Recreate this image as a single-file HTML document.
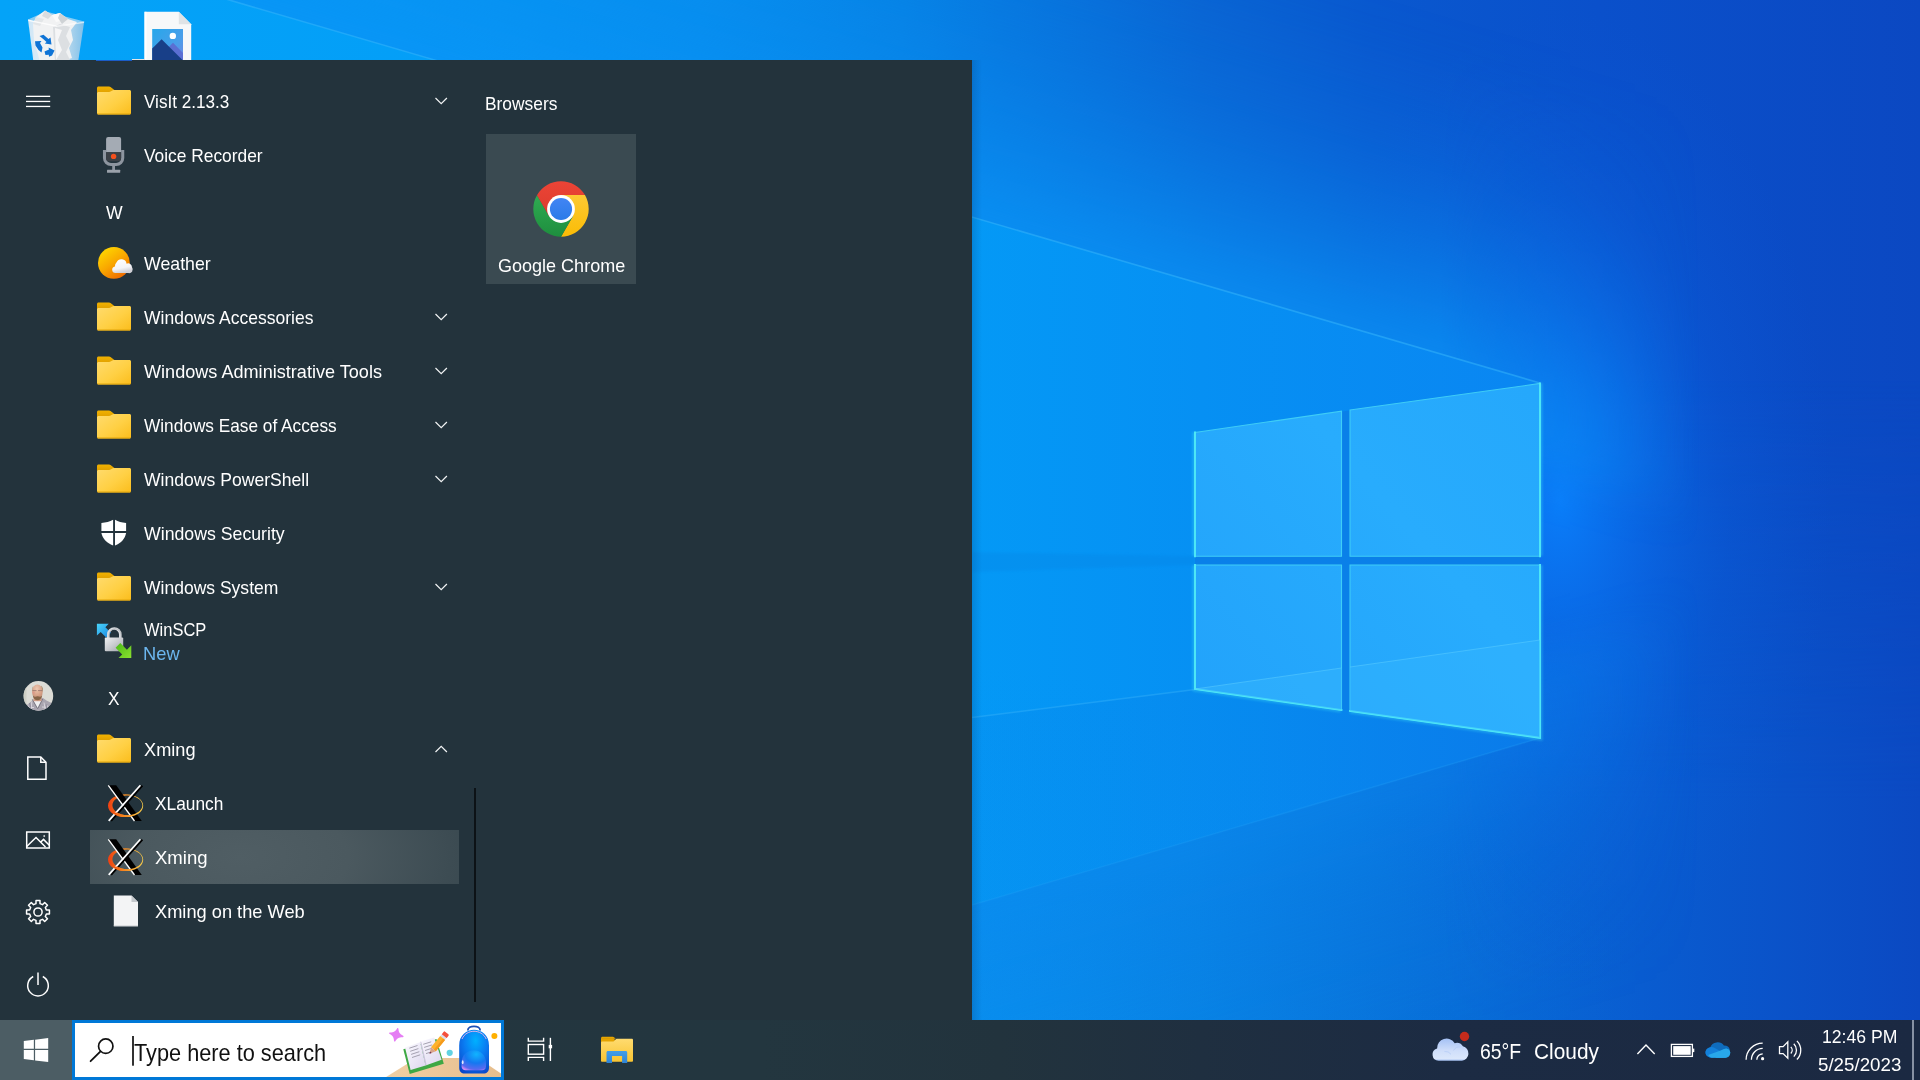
<!DOCTYPE html>
<html lang="en"><head><meta charset="utf-8"><title>Desktop</title>
<style>
html,body{margin:0;padding:0}
body{width:1920px;height:1080px;overflow:hidden;position:relative;background:#0a5fd0;font-family:"Liberation Sans",sans-serif}
.abs{position:absolute}
.tx{position:absolute;line-height:0;white-space:nowrap;display:block;transform-origin:0 0}
#wall{position:absolute;left:0;top:0;width:1920px;height:1080px}
#menu{position:absolute;left:0;top:60px;width:972px;height:960px;background:#23333c}
#taskbar{position:absolute;left:0;top:1020px;width:1920px;height:60px;background:linear-gradient(90deg,#24363f 0,#23363f 760px,#22333d 1000px,#1f2f40 1200px,#1c2b43 1450px,#1b2942 1920px)}
#startbtn{position:absolute;left:0;top:1020px;width:72px;height:60px;background:#4c5d64}
#search{position:absolute;left:72px;top:1020px;width:426px;height:54px;border:3px solid #0078d7;background:#fff}
#hl{position:absolute;left:90px;top:830px;width:369px;height:54px;background:radial-gradient(ellipse 270px 140px at 150px 27px,#505e64 0,#4b595f 40%,#3d4c53 78%,#36464d 100%)}
#tile{position:absolute;left:486px;top:134px;width:150px;height:150px;background:#3a4a51}
#scroll{position:absolute;left:474px;top:788px;width:2px;height:214px;background:#0c1216}
#showdesk{position:absolute;left:1912px;top:1020px;width:2px;height:60px;background:#8791a3}
svg{position:absolute;overflow:visible}
</style></head>
<body>
<svg id="wall" width="1920" height="1080" viewBox="0 0 1920 1080">
<defs>
<linearGradient id="wg" x1="0" x2="1920" y1="0" y2="0" gradientUnits="userSpaceOnUse">
<stop offset="0" stop-color="#02a2f8"/><stop offset=".21" stop-color="#039cf5"/><stop offset=".365" stop-color="#0590ef"/><stop offset=".47" stop-color="#0683e5"/><stop offset=".52" stop-color="#0778df"/><stop offset=".625" stop-color="#0964d3"/><stop offset=".715" stop-color="#0958cf"/><stop offset=".833" stop-color="#0a50cb"/><stop offset="1" stop-color="#0b48c2"/>
</linearGradient>
<linearGradient id="wg2" x1="0" x2="1920" y1="0" y2="0" gradientUnits="userSpaceOnUse">
<stop offset="0" stop-color="#03a3f8"/><stop offset=".3" stop-color="#049bf5"/><stop offset=".44" stop-color="#0794f1"/><stop offset=".52" stop-color="#098ced"/><stop offset=".625" stop-color="#0880e3"/><stop offset=".73" stop-color="#0870d9"/><stop offset=".855" stop-color="#095cd0"/><stop offset="1" stop-color="#0b49c2"/>
</linearGradient>
<linearGradient id="vm" x1="0" x2="0" y1="380" y2="800" gradientUnits="userSpaceOnUse"><stop offset="0" stop-color="#fff" stop-opacity="0"/><stop offset="1" stop-color="#fff" stop-opacity="1"/></linearGradient>
<mask id="vmask" maskUnits="userSpaceOnUse" x="0" y="0" width="1920" height="1080"><rect width="1920" height="1080" fill="url(#vm)"/></mask>
<linearGradient id="ray" x1="0" x2="1540" y1="0" y2="0" gradientUnits="userSpaceOnUse">
<stop offset="0" stop-color="#04a3f8"/><stop offset=".63" stop-color="#0499f6"/><stop offset=".78" stop-color="#0690f3"/><stop offset="1" stop-color="#0a86f2"/>
</linearGradient>
<linearGradient id="floor" x1="972" x2="1540" y1="0" y2="0" gradientUnits="userSpaceOnUse">
<stop offset="0" stop-color="#0593f2"/><stop offset=".5" stop-color="#0788ee"/><stop offset="1" stop-color="#0a78e8"/>
</linearGradient>
<radialGradient id="bot" cx="880" cy="1100" r="800" gradientUnits="userSpaceOnUse" gradientTransform="translate(880 1100) scale(1 .55) translate(-880 -1100)">
<stop offset="0" stop-color="#0aa0f4" stop-opacity=".25"/><stop offset=".5" stop-color="#0a94ee" stop-opacity=".12"/><stop offset="1" stop-color="#0a88ea" stop-opacity="0"/>
</radialGradient>
<radialGradient id="glow" cx="1560" cy="500" r="440" gradientUnits="userSpaceOnUse" gradientTransform="translate(1560 500) scale(.62 1.12) translate(-1560 -500)">
<stop offset="0" stop-color="#0a80fc" stop-opacity=".95"/><stop offset=".28" stop-color="#0a72f2" stop-opacity=".62"/><stop offset=".62" stop-color="#0a62e2" stop-opacity=".25"/><stop offset="1" stop-color="#0a58d8" stop-opacity="0"/>
</radialGradient>
<linearGradient id="pane" x1="1195" x2="1540" y1="700" y2="400" gradientUnits="userSpaceOnUse">
<stop offset="0" stop-color="#22a3fb"/><stop offset=".6" stop-color="#28acfd"/><stop offset="1" stop-color="#25a8fc"/>
</linearGradient>
<linearGradient id="msh" x1="972" x2="982" y1="0" y2="0" gradientUnits="userSpaceOnUse"><stop offset="0" stop-color="#003a70" stop-opacity=".22"/><stop offset="1" stop-color="#003a70" stop-opacity="0"/></linearGradient>
<linearGradient id="haze" x1="1256" y1="300" x2="1340.2" y2="12.0" gradientUnits="userSpaceOnUse"><stop offset="0" stop-color="#0a94f6" stop-opacity=".8"/><stop offset=".25" stop-color="#0a8ef2" stop-opacity=".55"/><stop offset=".6" stop-color="#0a86ee" stop-opacity=".22"/><stop offset="1" stop-color="#0a80ea" stop-opacity="0"/></linearGradient>
<linearGradient id="haze2" x1="1256" y1="821.5" x2="1329.3" y2="1070.9" gradientUnits="userSpaceOnUse"><stop offset="0" stop-color="#0a8af0" stop-opacity=".5"/><stop offset=".45" stop-color="#0a80ea" stop-opacity=".22"/><stop offset="1" stop-color="#0a78e6" stop-opacity="0"/></linearGradient>
<linearGradient id="hm" x1="1440" x2="1700" y1="0" y2="0" gradientUnits="userSpaceOnUse"><stop offset="0" stop-color="#fff" stop-opacity="1"/><stop offset="1" stop-color="#fff" stop-opacity="0"/></linearGradient>
<mask id="hmask" maskUnits="userSpaceOnUse" x="0" y="0" width="1920" height="1080"><rect width="1920" height="1080" fill="url(#hm)"/></mask>
<filter id="b20" color-interpolation-filters="sRGB" x="-10%" y="-30%" width="120%" height="160%"><feGaussianBlur stdDeviation="22"/></filter>
<filter id="b8" color-interpolation-filters="sRGB" x="-20%" y="-20%" width="140%" height="140%"><feGaussianBlur stdDeviation="8"/></filter>
<filter id="b2" color-interpolation-filters="sRGB"><feGaussianBlur stdDeviation="1.2"/></filter>
</defs>
<rect width="1920" height="1080" fill="url(#wg)"/>
<rect width="1920" height="1080" fill="url(#wg2)" mask="url(#vmask)"/>
<!-- glow right of logo -->
<rect x="1200" y="0" width="720" height="1020" fill="url(#glow)"/>
<g mask="url(#hmask)"><polygon points="-122.4,-19.5 1777.6,535.8 1889.8,151.8 -10.2,-403.4" fill="url(#haze)" filter="url(#b20)"/></g>
<g mask="url(#hmask)"><polygon points="1777.4,584.8 577.4,937.6 673.3,1263.8 1873.3,911.0" fill="url(#haze2)" filter="url(#b20)"/></g>
<!-- main light ray: upper edge line through (205,-7)-(1540,383); lower edge to floor -->
<polygon points="0,-67 1540,383 1540,738 972,905 0,1100" fill="url(#ray)"/>
<!-- floor lower band -->
<polygon points="0,740 972,717 1195,689 1540,738 972,905 0,1180" fill="url(#floor)" opacity=".8"/>

<rect y="600" width="1920" height="480" fill="url(#bot)"/>
<line x1="972" y1="717.500" x2="1195" y2="689.500" stroke="#3cb8fc" stroke-width="1.500" opacity=".4"/>
<line x1="972" y1="905" x2="1540" y2="738" stroke="#2aa4f6" stroke-width="1.500" opacity=".22"/>
<!-- upper ray bright edge -->
<line x1="0" y1="-67" x2="1540" y2="383" stroke="#35b4fb" stroke-width="1.6" opacity=".55"/>
<polygon points="972,552 1195,556 1195,565 972,572" fill="#0580e0" opacity=".25" filter="url(#b2)"/>
<g fill="none" stroke="#40e0f5" stroke-width="5" opacity=".35" filter="url(#b2)"><polyline points="1195,432 1195,556"/><polyline points="1195,565 1195,689 1341,710"/><polyline points="1350,711 1540,738 1540,565"/><polyline points="1540,556 1540,383"/></g>
<polygon points="1195,432.500 1540,383.500 1540,737.800 1195,689" fill="#0a7ee6" opacity=".85"/>
<!-- logo panes -->
<g fill="url(#pane)" stroke="#3fcdf6" stroke-width="1.100" stroke-linejoin="miter">
<polygon points="1195,432.5 1341.5,411.2 1341.5,556.3 1195,556.3"/>
<polygon points="1350,410 1540,383.5 1540,556.3 1350,556.3"/>
<polygon points="1195,565 1341.5,565 1341.5,710 1195,689"/>
<polygon points="1350,565 1540,565 1540,737.8 1350,711"/>
</g>
<g fill="none" stroke="#4fe8f6" stroke-width="1.900" stroke-linecap="square"><polyline points="1195,432.500 1195,556.300"/><polyline points="1195,565 1195,689 1341.500,710"/><polyline points="1350,711 1540,737.800 1540,565"/><polyline points="1540,556.300 1540,383.500"/></g>
<!-- reflection inside lower panes -->
<polygon points="1195,689 1341.500,668 1341.500,710" fill="#35b6fe" opacity=".5"/><line x1="1195" y1="689" x2="1341.500" y2="668" stroke="#5fd0ff" stroke-width="1" opacity=".5"/>
<polygon points="1350,667 1540,640 1540,737.800 1350,711" fill="#35b6fe" opacity=".45"/><line x1="1350" y1="667" x2="1540" y2="640" stroke="#5fd0ff" stroke-width="1" opacity=".5"/>
<!-- menu shadow -->
<rect x="972" y="60" width="10" height="960" fill="url(#msh)"/>
</svg>

<svg style="left:0;top:0" width="220" height="60" viewBox="0 0 220 60">
<defs>
<linearGradient id="binL" x1="0" x2="1" y1="0" y2="0"><stop offset="0" stop-color="#cfe6f6"/><stop offset="1" stop-color="#eef4f8"/></linearGradient>
<linearGradient id="binR" x1="0" x2="1" y1="0" y2="0"><stop offset="0" stop-color="#dfe9ef"/><stop offset="1" stop-color="#7fc0ea"/></linearGradient>
<linearGradient id="sky" x1="0" x2="1" y1="0" y2="1"><stop offset="0" stop-color="#27a7ea"/><stop offset=".6" stop-color="#4a9eea"/><stop offset="1" stop-color="#7a7fe0"/></linearGradient>
<clipPath id="c60"><rect x="0" y="0" width="220" height="60"/></clipPath>
</defs>
<g clip-path="url(#c60)">
<!-- recycle bin -->
<polygon points="28,19.5 57,25.5 55.5,66 34,66" fill="url(#binL)"/>
<polygon points="57,25.5 84.2,21.5 77.5,66 55.5,66" fill="url(#binR)"/>
<polygon points="28,19.5 46,11.5 84.2,21.5 57,25.5" fill="#bfe0f5" opacity=".7"/>
<!-- crumpled paper -->
<polygon points="33,24 36,17 45,10.5 52,15 60,13 68,19 77,22 71,30 73,40 69,48 72,58 60,62 40,62 34,40" fill="#f1f2f3"/>
<polygon points="45,10.5 52,15 48,19 42,16" fill="#d9dcdf"/>
<polygon points="52,15 60,13 64,20 56,22" fill="#fafafa"/>
<polygon points="60,13 68,19 62,24 58,18" fill="#cfd3d6"/>
<polygon points="36,17 44,19 40,26 33,24" fill="#e3e6e8"/>
<polygon points="53,27 60,24 70,27 66,36 70,44 66,52 70,60 55,62" fill="#dcdfe2"/>
<polygon points="55,28 62,30 58,40 62,50 56,60" fill="#f6f6f7"/>
<polygon points="28,19.5 57,25.5 57,27 28.3,21" fill="#fff" opacity=".8"/>
<polygon points="57,25.5 84.2,21.5 84,23 57,27" fill="#fff" opacity=".6"/>
<!-- recycle arrows -->
<g fill="#0f74d6">
<polygon points="39.5,36 43.5,34.8 48.5,39 50.5,37.5 51.5,44.5 44.8,43.5 46.5,42 43.5,39.2"/>
<polygon points="35,41.2 41.5,41 40,43 42.5,47.5 41.5,52.5 38.5,50 35.5,45.5"/>
<polygon points="44.5,51.5 49,49.5 48.5,47.5 54.5,50.5 52,55.5 49,56.8 48.8,54.8 45.5,55"/>
</g>
<!-- image file -->
<polygon points="144.5,11.8 178.8,11.8 191.2,24.2 191.2,66 144.5,66" fill="#f7f8f9"/>
<polygon points="178.8,11.8 191.2,24.2 178.8,24.2" fill="#dfe3e6"/>
<rect x="144.5" y="11.8" width="2" height="54" fill="#fff"/>
<rect x="152.2" y="29" width="30.8" height="37" fill="url(#sky)"/>
<circle cx="172.8" cy="35.9" r="3.2" fill="#fff"/>
<polygon points="163,53 173,42.8 183,53 183,66 163,66" fill="#5b6fd3"/>
<polygon points="152.2,48.5 161.6,39.3 183,60.5 183,66 152.2,66" fill="#183f88"/>
</g>
</svg>

<div id="menu"></div>
<div id="hl"></div>
<div class="abs" style="left:96px;top:60px;width:36px;height:1px;background:#1b5cc8"></div><div class="abs" style="left:132px;top:59px;width:13px;height:1px;background:#e4e6e8"></div>
<div id="tile"></div>
<div id="scroll"></div>
<div id="taskbar"></div>
<div id="startbtn"></div>
<div id="search"></div>
<div id="showdesk"></div>
<svg style="left:0;top:0" width="1920" height="1080" viewBox="0 0 1920 1080">
<defs>
<linearGradient id="fBody" x1="0" x2="1" y1="0" y2="1"><stop offset="0" stop-color="#ffdb6e"/><stop offset=".55" stop-color="#ffd044"/><stop offset="1" stop-color="#fbbd1c"/></linearGradient>
<linearGradient id="fTab" x1="0" x2="0" y1="0" y2="1"><stop offset="0" stop-color="#f2b200"/><stop offset="1" stop-color="#dc9c00"/></linearGradient>
<symbol id="folder" viewBox="0 0 34 28" overflow="visible">
<path d="M1.500 0h10.600c.5 0 1 .2 1.400.5l3.900 3.100V8H0V1.500C0 .7.700 0 1.500 0z" fill="url(#fTab)"/>
<path d="M0 7.300c0-.9.700-1.600 1.600-1.600h10.600c.5 0 1-.2 1.400-.5l2.300-1.300c.4-.2.800-.35 1.300-.35h15.300c.8 0 1.500.7 1.500 1.500v21.450c0 .8-.7 1.500-1.500 1.500H1.500C.7 28 0 27.300 0 26.500z" fill="url(#fBody)"/>
<path d="M0 26v.5C0 27.300.7 28 1.500 28h31c.8 0 1.500-.7 1.500-1.500V26c0 .6-.6 1-1.300 1H1.300C.6 27 0 26.600 0 26z" fill="#e2a50b"/>
</symbol>
<symbol id="chev" viewBox="0 0 12 7" overflow="visible"><polyline points="0.3,0.5 6,6.2 11.700,0.500" fill="none" stroke="#f2f4f5" stroke-width="1.200"/></symbol>
<symbol id="xicon" viewBox="0 0 35 37" overflow="visible">
<defs><linearGradient id="xr" x1="0" x2="1" y1="0" y2="0"><stop offset="0" stop-color="#ee3f12"/><stop offset=".4" stop-color="#f5801c"/><stop offset="1" stop-color="#f7cc4a"/></linearGradient>
<clipPath id="xlow"><rect x="-2" y="27.500" width="40" height="12"/></clipPath></defs>
<path id="xring" fill="url(#xr)" fill-rule="evenodd" d="M17.800 9.300C27.500 9.300 35.400 14.400 35.400 20.700S27.500 32.100 17.800 32.100 0.200 27 0.200 20.700 8.100 9.300 17.800 9.300zM19.600 10.400C11.300 10.400 4.600 14.800 4.600 20.300s6.700 9.900 15 9.900 15-4.400 15-9.900-6.700-9.900-15-9.900z"/>
<polygon points="0.600,0.300 8.400,0.300 34,35.900 26.300,35.900" fill="#000"/>
<line x1="0.500" y1="0.300" x2="26.700" y2="36" stroke="#fff" stroke-width="1.300"/>
<line x1="34.600" y1="0.600" x2="3.300" y2="35.800" stroke="#000" stroke-width="1.900"/>
<line x1="32.600" y1="0.300" x2="0.900" y2="35.900" stroke="#fff" stroke-width="1.700"/>
<use href="#xring" clip-path="url(#xlow)"/>
</symbol>
</defs>

<rect x="26" y="95.7" width="24.200" height="1.300" fill="#fff"/>
<rect x="26" y="100.80000000000001" width="24.200" height="1.300" fill="#fff"/>
<rect x="26" y="105.80000000000001" width="24.200" height="1.300" fill="#fff"/>
<use href="#folder" x="97" y="86.4" width="34" height="28"/>
<use href="#folder" x="97" y="302.4" width="34" height="28"/>
<use href="#folder" x="97" y="356.4" width="34" height="28"/>
<use href="#folder" x="97" y="410.4" width="34" height="28"/>
<use href="#folder" x="97" y="464.4" width="34" height="28"/>
<use href="#folder" x="97" y="572.4" width="34" height="28"/>
<use href="#folder" x="97" y="734.4" width="34" height="28"/>
<use href="#chev" x="435.200" y="97.5" width="12" height="7"/>
<use href="#chev" x="435.200" y="313.5" width="12" height="7"/>
<use href="#chev" x="435.200" y="367.5" width="12" height="7"/>
<use href="#chev" x="435.200" y="421.5" width="12" height="7"/>
<use href="#chev" x="435.200" y="475.5" width="12" height="7"/>
<use href="#chev" x="435.200" y="583.5" width="12" height="7"/>
<g transform="translate(435.200 752.500) scale(1 -1)"><use href="#chev" width="12" height="7"/></g>
<use href="#xicon" x="107.800" y="785" width="35" height="37"/>
<use href="#xicon" x="107.800" y="839" width="35" height="37"/>
<g>
<defs><linearGradient id="micg" x1="0" x2="0" y1="137" y2="153"><stop offset="0" stop-color="#a4abb4"/><stop offset="1" stop-color="#7f8791"/></linearGradient></defs>
<path d="M104.500 150v8a6.500 6.500 0 0 0 6.500 6.500h5.200a6.500 6.500 0 0 0 6.500-6.500v-8" fill="none" stroke="#8d959f" stroke-width="3.100"/>
<rect x="112.200" y="165" width="2.800" height="5.500" fill="#8d959f"/>
<rect x="107" y="169.800" width="13.200" height="3" rx=".5" fill="#9aa1aa"/>
<path d="M106.100 139a2 2 0 0 1 2-2h11a2 2 0 0 1 2 2v13.300h-15z" fill="url(#micg)"/>
<path d="M106.100 152.200h15v6a3 3 0 0 1-3 3h-9a3 3 0 0 1-3-3z" fill="#3b4046"/>
<circle cx="113.600" cy="156.400" r="2.700" fill="#f4501d"/>
</g>
<g>
<defs><linearGradient id="sung" x1="0.150" x2=".8" y1=".05" y2=".95"><stop offset="0" stop-color="#ffd800"/><stop offset=".5" stop-color="#f9a800"/><stop offset="1" stop-color="#ee6800"/></linearGradient>
<linearGradient id="cldg" x1="0" x2=".3" y1="0" y2="1" gradientUnits="objectBoundingBox"><stop offset="0" stop-color="#ffffff"/><stop offset=".7" stop-color="#f4f4f6"/><stop offset="1" stop-color="#d0d0d6"/></linearGradient></defs>
<circle cx="113.900" cy="262.900" r="15.900" fill="url(#sung)"/>
<g fill="url(#cldg)"><path d="M115.500 273.100a3.300 3.300 0 0 1-.6-6.550 5.400 5.400 0 0 1 1.700-4.200 5.300 5.300 0 0 1 10 1.300 3.800 3.800 0 0 1 5.400 3.500 3.750 3.750 0 0 1-3.700 5.950z"/></g>
</g>
<g fill="#fff">
<path d="M113.100 519.800v11.100h-11.700v-8c4.500-.2 8.300-1.200 11.700-3.100z"/>
<path d="M115 519.800c3.400 1.900 6.600 2.900 11.100 3.100v8H115z"/>
<path d="M101.400 532.900h11.700v12.500c-6.300-2.700-10.600-6.700-11.700-12.500z"/>
<path d="M115 532.900h11.100c-1.100 5.800-4.800 9.800-11.100 12.500z"/>
</g>
<g>
<defs><linearGradient id="lockg" x1="0" x2="1" y1="0" y2="1"><stop offset="0" stop-color="#f0f1f2"/><stop offset=".5" stop-color="#c9ccd0"/><stop offset="1" stop-color="#9ea2a8"/></linearGradient>
<linearGradient id="bla" x1="0" x2="1" y1="0" y2="1"><stop offset="0" stop-color="#49d5fb"/><stop offset="1" stop-color="#1b86e0"/></linearGradient>
<linearGradient id="gra" x1="0" x2="1" y1="0" y2="1"><stop offset="0" stop-color="#4aba16"/><stop offset="1" stop-color="#8be030"/></linearGradient></defs>
<path d="M96.900 623.800h11.800l-3.300 3.400 5.500 5.500-4.700 4.700-5.500-5.500-3.800 3.700z" fill="url(#bla)"/>
<path d="M108.300 639v-4.500a6 6 0 0 1 12 0v4.500" fill="none" stroke="#d9dcdf" stroke-width="2.600"/>
<path d="M108.300 639v-4.500a6 6 0 0 1 12 0v4.500" fill="none" stroke="#8e9399" stroke-width=".7" transform="translate(.9 .3)" opacity=".7"/>
<rect x="104.800" y="637.500" width="18.400" height="13.800" rx="1" fill="url(#lockg)"/>
<path d="M131.300 658.100h-12.800l3.700-3.700-6.600-6.600 4.700-4.700 6.600 6.600 4.400-4.400z" fill="url(#gra)"/>
</g>
<g>
<path d="M113.800 895.500h17.700l6.500 6.500v24.300h-24.200z" fill="#f3f4f5"/>
<path d="M131.500 895.500l6.500 6.500h-6.500z" fill="#c4c8cc"/>
<rect x="113.800" y="925.300" width="24.200" height="1" fill="#d5d7da"/>
</g>
<g>
<defs><clipPath id="avc"><circle cx="38.400" cy="695.900" r="14.800"/></clipPath>
<radialGradient id="avf" cx=".45" cy=".3" r=".7"><stop offset="0" stop-color="#edc7b0"/><stop offset=".6" stop-color="#d9a58c"/><stop offset="1" stop-color="#c48d74"/></radialGradient>
<filter id="avb"><feGaussianBlur stdDeviation=".45"/></filter></defs>
<g clip-path="url(#avc)">
<rect x="23" y="680" width="31" height="32" fill="#dcdcd6"/>
<rect x="23" y="680" width="3.500" height="32" fill="#cfd0c6"/>
<g filter="url(#avb)">
<path d="M24.500 712l2.500-7 6.500-5.500 4-1.800 5.500.3 3.500 2.500 5 2.500 3 9z" fill="#a9a5b0"/>
<path d="M28 712l1.500-9M31 712l.8-10.500M45.500 712l-1.500-9.500M49 712l-2-7.500M26 707.500l8 0M42 707l9 .5" stroke="#d8d5dc" stroke-width="1" fill="none"/>
<path d="M29.500 703l1.500 9M47 704l-1 8" stroke="#7f7a8c" stroke-width=".8" fill="none"/>
<path d="M33.200 700.500l4.400 7.800 4.200-8z" fill="#efeff0"/>
<path d="M32.300 699.300l5.200 9.200M42.600 699l-4.800 9.500" stroke="#55535f" stroke-width=".8" fill="none" opacity=".8"/>
<path d="M33.500 697h8v4.200h-8z" fill="#cf9d86"/>
<ellipse cx="37.400" cy="691.700" rx="5.300" ry="7.300" fill="url(#avf)"/>
<path d="M41.200 685.500c1.300 1.200 1.900 3.300 1.700 6.500-.5-2.200-1.200-4.200-1.700-6.500zM33.300 686c-.9 1.200-1.300 2.800-1.200 5 .3-2 .7-3.500 1.200-5z" fill="#9a7a52"/>
<path d="M32.800 695.500c.5 3 2.300 4.700 4.700 4.700s4.200-1.700 4.700-4.700c-1 1-1.700 1.300-2.600 1.300-.7-.8-3.500-.8-4.200 0-.9 0-1.600-.3-2.600-1.300z" fill="#86654a"/>
<path d="M32.300 690.600h4.200M38 690.600h4.400" stroke="#8a6a66" stroke-width=".7"/>
<ellipse cx="33.600" cy="692.800" rx="1.300" ry="1" fill="#dd8f88" opacity=".6"/>
</g>
</g></g>
<g fill="none" stroke="#fff" stroke-width="1.500">
<path d="M27.800 757h13l5.200 5.200v17H27.800z"/><path d="M40.800 757v5.200h5.200"/>
<rect x="26.700" y="832" width="22.600" height="16"/>
<path d="M26.700 846.500l9.300-9 9.500 9.500M40.300 842.500l3.200-3.100 5.800 5.800"/>
<circle cx="44.200" cy="836" r=".6" fill="#fff" stroke-width=".6"/>
<circle cx="38" cy="912" r="4.100"/>
<path d="M38 972.500v12.500"/>
<path d="M33.200 976.500a10.300 10.300 0 1 0 9.600 0"/>
</g>
<path d="M35.99 903.64 L36.01 900.57 L39.99 900.57 L40.01 903.64 L42.49 904.67 L44.67 902.51 L47.49 905.33 L45.33 907.51 L46.36 909.99 L49.43 910.01 L49.43 913.99 L46.36 914.01 L45.33 916.49 L47.49 918.67 L44.67 921.49 L42.49 919.33 L40.01 920.36 L39.99 923.43 L36.01 923.43 L35.99 920.36 L33.51 919.33 L31.33 921.49 L28.51 918.67 L30.67 916.49 L29.64 914.01 L26.57 913.99 L26.57 910.01 L29.64 909.99 L30.67 907.51 L28.51 905.33 L31.33 902.51 L33.51 904.67Z" fill="none" stroke="#fff" stroke-width="1.500" stroke-linejoin="round"/>
<g>
<defs>
<linearGradient id="cy" x1="0" x2="0" y1="195.1" y2="236.7" gradientUnits="userSpaceOnUse"><stop offset="0" stop-color="#fcc934"/><stop offset="1" stop-color="#fbbc05"/></linearGradient>
<linearGradient id="cg" x1="0" x2="0" y1="195.1" y2="236.7" gradientUnits="userSpaceOnUse"><stop offset="0" stop-color="#2fab52"/><stop offset="1" stop-color="#1e8e3e"/></linearGradient>
<linearGradient id="crd" x1="0" x2="0" y1="181.3" y2="222.9" gradientUnits="userSpaceOnUse"><stop offset="0" stop-color="#ec4436"/><stop offset="1" stop-color="#d93a2b"/></linearGradient>
<linearGradient id="cb" x1="0" x2="0" y1="197.9" y2="220.1" gradientUnits="userSpaceOnUse"><stop offset="0" stop-color="#4285f4"/><stop offset="1" stop-color="#2a7be8"/></linearGradient>
</defs>
<path d="M561.00 195.10L584.96 195.10A27.7 27.7 0 0 1 561.06 236.70L573.04 215.95Z" fill="url(#cy)"/>
<path d="M573.04 215.95L561.06 236.70A27.7 27.7 0 0 1 536.98 195.20L548.96 215.95Z" fill="url(#cg)"/>
<path d="M548.96 215.95L536.98 195.20A27.7 27.7 0 0 1 584.96 195.10L561.00 195.10Z" fill="url(#crd)"/>
<circle cx="561.0" cy="209.0" r="13.9" fill="#fff"/>
<circle cx="561.0" cy="209.0" r="11.1" fill="url(#cb)"/>
</g>
</svg>
<svg style="left:0;top:0" width="1920" height="1080" viewBox="0 0 1920 1080">
<defs>
<linearGradient id="tbl" x1="0" x2="1" y1="0" y2="0"><stop offset="0" stop-color="#f0cfa4"/><stop offset="1" stop-color="#e6bd8c"/></linearGradient>
<radialGradient id="bpk" cx=".55" cy=".25" r=".85"><stop offset="0" stop-color="#00b0ff"/><stop offset=".45" stop-color="#0a7cf2"/><stop offset="1" stop-color="#0a45c8"/></radialGradient>
<radialGradient id="bpp" cx=".6" cy=".2" r=".9"><stop offset="0" stop-color="#10b4ff"/><stop offset=".5" stop-color="#1478f0"/><stop offset=".85" stop-color="#5a6af0"/><stop offset="1" stop-color="#d88af5"/></radialGradient>
<linearGradient id="pg" x1="0" x2="1" y1="0" y2="1"><stop offset="0" stop-color="#fbfaff"/><stop offset="1" stop-color="#dcd6ee"/></linearGradient>
<clipPath id="sbx"><rect x="75" y="1023" width="426" height="54"/></clipPath>
<linearGradient id="wcl" x1="0" x2="0" y1="1038" y2="1061" gradientUnits="userSpaceOnUse"><stop offset="0" stop-color="#a3c0f4"/><stop offset=".55" stop-color="#cfdefa"/><stop offset=".9" stop-color="#dbe7fb"/><stop offset="1" stop-color="#9ab8ee"/></linearGradient>
<linearGradient id="feb" x1="0" x2="0" y1="1038" y2="1062" gradientUnits="userSpaceOnUse"><stop offset="0" stop-color="#ffdc72"/><stop offset="1" stop-color="#f8c431"/></linearGradient>
<linearGradient id="fes" x1="0" x2="0" y1="1051" y2="1063" gradientUnits="userSpaceOnUse"><stop offset="0" stop-color="#419eea"/><stop offset="1" stop-color="#2f84d6"/></linearGradient>
</defs>
<!-- windows logo -->
<g fill="#fff">
<polygon points="23.800,1041.100 33.850,1039.850 33.850,1048.650 23.800,1048.650"/>
<polygon points="35.100,1039.700 48.200,1037.900 48.200,1048.650 35.100,1048.650"/>
<polygon points="23.800,1050 33.850,1050 33.850,1060.200 23.800,1059"/>
<polygon points="35.100,1050 48.200,1050 48.200,1062.050 35.100,1060.400"/>
</g>
<!-- search icon -->
<circle cx="105.750" cy="1046.150" r="7.200" fill="none" stroke="#111" stroke-width="1.700"/>
<line x1="100.500" y1="1051.300" x2="90.600" y2="1061.200" stroke="#111" stroke-width="1.800" stroke-linecap="round"/>
<!-- caret -->
<rect x="132.200" y="1036" width="1.600" height="29.700" fill="#000"/>
<!-- illustration -->
<g clip-path="url(#sbx)">
<polygon points="416.600,1058 478,1058 506,1077 386.100,1077" fill="url(#tbl)"/>
<path d="M396.900 1028.600c.9 3 2.200 4.600 6.300 5.700 .8 .3 .8 1.100 0 1.400-4.100 1.100-5.400 2.600-6.300 5.700-.3 .8-1.100 .8-1.400 0-.9-3.100-2.200-4.600-6.100-5.700-.8-.3-.8-1.100 0-1.400 3.900-1.100 5.200-2.700 6.100-5.700 .3-.8 1.100-.8 1.400 0z" fill="#e57df4" transform="rotate(14 396.900 1035)"/>
<circle cx="494.400" cy="1036" r="3" fill="#ffb000"/>
<circle cx="449.700" cy="1052.800" r="3.100" fill="#62d2e2"/>
<!-- book -->
<polygon points="403.300,1049.200 436.500,1039 443.800,1063.800 409.700,1074" fill="#3ea844"/>
<polygon points="405,1047.500 420.200,1042.200 425.600,1065.500 410.600,1070" fill="url(#pg)"/>
<polygon points="420.200,1041.600 434.200,1037.600 441.600,1059.800 425.600,1065.500" fill="url(#pg)"/>
<polygon points="420.200,1041.600 421.400,1042.200 426.600,1064.800 425.600,1065.500" fill="#c9c2dc"/>
<g stroke="#9c98a8" stroke-width=".9" fill="none"><path d="M409.300 1048.200l8.200-2.700M410.200 1051.300l8.200-2.700M411.100 1054.400l8.200-2.700M412 1057.500l8.200-2.700M423.200 1044.300l8-2.500M424.100 1047.400l8-2.500M425 1050.500l6-1.900M426 1053.600l5-1.600"/></g>
<!-- pencil -->
<g transform="rotate(39.500 440 1041)">
<rect x="437" y="1030.500" width="6.200" height="4.500" rx="1" fill="#f4503c"/>
<rect x="437" y="1034.600" width="6.200" height="2.600" fill="#dcdcea"/>
<rect x="437" y="1037" width="6.200" height="14.500" fill="#fdb22c"/>
<rect x="440.800" y="1037" width="2.400" height="14.500" fill="#f59a1c"/>
<polygon points="437,1051.500 443.200,1051.500 440.100,1057.500" fill="#d9a48a"/>
<polygon points="439.100,1055.500 441.100,1055.500 440.100,1057.600" fill="#6a2a50"/>
</g>
<!-- backpack -->
<path d="M467.800 1030.500c0-5.600 12.400-5.600 12.400 0" fill="none" stroke="#1c4fb4" stroke-width="1.800"/>
<path d="M459.200 1045.500c0-21 29.800-21 29.800 0v22.200c0 3.600-2.200 5.900-5.600 5.900h-18.600c-3.400 0-5.600-2.300-5.600-5.900z" fill="url(#bpk)"/>
<path d="M462 1039c4.500-10.300 19.500-10.300 24.200 0" fill="none" stroke="#f3b6e6" stroke-width=".9"/>
<path d="M461.600 1063c0-17 24.400-17 24.400 0v3.500c0 2.300-1.700 3.700-3.900 3.700h-16.600c-2.200 0-3.900-1.400-3.900-3.700z" fill="url(#bpp)"/>
<ellipse cx="462.700" cy="1062.300" rx=".9" ry="2" fill="#fff" opacity=".85"/>
</g>
<!-- task view -->
<g fill="none" stroke="#fff" stroke-width="1.400">
<rect x="528.300" y="1044.500" width="15.300" height="9.700"/>
<path d="M528.300 1037.800v3.300h15.300v-3.300M528.300 1061v-3.600h15.300v3.600"/>
<path d="M550.400 1037.800v23.200"/>
</g>
<rect x="548.700" y="1044.900" width="3.400" height="3.400" fill="#fff"/>
<!-- file explorer -->
<path d="M601 1038.300c0-.9.600-1.500 1.500-1.500h10.300c.6 0 1.100.2 1.500.6l1.600 1.400H601z" fill="#e8a600"/>
<path d="M601 1038.300h12.300l1.600 1.400v3h-13.900z" fill="#e4a300"/>
<path d="M601 1042.700c0-.8.500-1.200 1.300-1.200h10.200c.6 0 1.200-.2 1.600-.6l1.700-1.600c.4-.4.900-.55 1.500-.55h14.400c.8 0 1.300.5 1.300 1.300v20.600c0 .7-.5 1.150-1.300 1.150h-29.400c-.8 0-1.300-.45-1.300-1.150z" fill="url(#feb)"/>
<path d="M606.500 1052.400c0-.9.600-1.500 1.500-1.500h17.700c.9 0 1.500.6 1.500 1.500v10.600h-5.100v-7.100h-10.100v7.100h-5.500z" fill="url(#fes)"/>
<!-- weather cloud -->
<path d="M1438.600 1060.800a6.300 6.300 0 0 1-1.500-12.350 9.500 9.500 0 0 1 17.600-5.300 7.400 7.400 0 0 1 8.200 3.150 7.400 7.400 0 0 1-.9 14.500z" fill="url(#wcl)"/>
<path d="M1444.500 1051.500a7 7 0 0 1 6.500 2.800M1453.500 1050.500a7 7 0 0 1 6.800-3.600" fill="none" stroke="#b5ccf6" stroke-width="1" opacity=".8"/>
<circle cx="1464.500" cy="1036.500" r="4.700" fill="#c42b1c"/>
<!-- tray chevron -->
<polyline points="1637.400,1053.900 1646,1045 1654.700,1053.900" fill="none" stroke="#fff" stroke-width="1.400"/>
<!-- battery -->
<rect x="1671.400" y="1044.400" width="21" height="12" fill="none" stroke="#fff" stroke-width="1.300"/>
<rect x="1673.200" y="1046.100" width="17.500" height="8.700" fill="#fff"/>
<rect x="1693" y="1048.600" width="1.300" height="3.500" fill="#fff"/>
<!-- onedrive -->
<g transform="translate(0 1057.700) scale(1 .9) translate(0 -1057.700)">
<path d="M1711.500 1057.700a5.900 5.900 0 0 1-1.200-11.700 7.600 7.600 0 0 1 13.600-1.900 5.900 5.900 0 0 1 2.500 11.300c-1 .9-2.300 2.300-4.400 2.300z" fill="#0f6cbd"/>
<path d="M1710.300 1046a6 6 0 0 1 4.400.9l7.300 4.400-8 5.600-2.500.8a5.900 5.900 0 0 1-1.200-11.700z" fill="#1380da"/>
<path d="M1716.500 1048l5.500 3.300 3.800-1.700a4.600 4.600 0 0 0-1.900-5.500 7.600 7.600 0 0 0-13.600 1.900c2.200-.4 4.300.8 6.200 2z" fill="#0a5eaa" opacity=".0"/>
<path d="M1708.200 1054.800l13.800-5.700 4.400-1.600a5.300 5.300 0 0 1-1.100 10.200h-12.800c-1.800 0-3.400-1.200-4.300-2.900z" fill="#28a8ea"/>
<path d="M1722 1049.100l3-1.300a4.800 4.800 0 0 1 5.200 3.800c.3 3-1.700 6.100-4.900 6.100h-10z" fill="#28a8ea"/>
</g>
<!-- wifi -->
<g fill="none" stroke="#fff" stroke-width="1.300">
<path d="M1746.100 1059.700a16.600 16.600 0 0 1 16.600-16.600"/>
<path d="M1751.400 1059.700a11.300 11.300 0 0 1 11.300-11.300"/>
<path d="M1756.800 1059.700a5.900 5.900 0 0 1 5.900-5.900"/>
</g>
<circle cx="1762.600" cy="1058.700" r="1.600" fill="#fff"/>
<!-- volume -->
<g fill="none" stroke="#fff" stroke-width="1.300" stroke-linejoin="miter">
<path d="M1779.500 1046.600h3.600l4.700-4.700v16.400l-4.700-4.700h-3.600z"/>
<path d="M1790.800 1046.900a4.700 4.700 0 0 1 0 6.600"/>
<path d="M1793.800 1043.800a9 9 0 0 1 0 12.800"/>
<path d="M1796.900 1040.900a13.200 13.200 0 0 1 0 18.600"/>
</g>
</svg>

<span class="tx" id="t_visit" style="left:144.27px;top:101.9165px;font-size:19px;color:#fff;transform:scaleX(0.9011);">VisIt 2.13.3</span>
<span class="tx" id="t_voice" style="left:144.27px;top:155.9165px;font-size:19px;color:#fff;transform:scaleX(0.9130);">Voice Recorder</span>
<span class="tx" id="t_w" style="left:106.02px;top:213.21650000000002px;font-size:19px;color:#fff;transform:scaleX(0.9286);">W</span>
<span class="tx" id="t_weather" style="left:144.27px;top:263.9165px;font-size:19px;color:#fff;transform:scaleX(0.9331);">Weather</span>
<span class="tx" id="t_acc" style="left:144.27px;top:317.9165px;font-size:19px;color:#fff;transform:scaleX(0.9220);">Windows Accessories</span>
<span class="tx" id="t_adm" style="left:144.26px;top:371.9165px;font-size:19px;color:#fff;transform:scaleX(0.9522);">Windows Administrative Tools</span>
<span class="tx" id="t_ease" style="left:144.27px;top:425.9165px;font-size:19px;color:#fff;transform:scaleX(0.9077);">Windows Ease of Access</span>
<span class="tx" id="t_ps" style="left:144.27px;top:479.9165px;font-size:19px;color:#fff;transform:scaleX(0.9251);">Windows PowerShell</span>
<span class="tx" id="t_sec" style="left:144.27px;top:533.9165px;font-size:19px;color:#fff;transform:scaleX(0.9320);">Windows Security</span>
<span class="tx" id="t_sys" style="left:144.27px;top:587.9165px;font-size:19px;color:#fff;transform:scaleX(0.9220);">Windows System</span>
<span class="tx" id="t_winscp" style="left:144.28px;top:630.4165px;font-size:19px;color:#fff;transform:scaleX(0.8681);">WinSCP</span>
<span class="tx" id="t_new" style="left:143.16px;top:654.3165px;font-size:19px;color:#6cb6ee;transform:scaleX(0.9630);">New</span>
<span class="tx" id="t_x" style="left:108.30px;top:699.2165px;font-size:19px;color:#fff;transform:scaleX(0.9064);">X</span>
<span class="tx" id="t_xming" style="left:144.02px;top:749.9165px;font-size:19px;color:#fff;transform:scaleX(0.9569);">Xming</span>
<span class="tx" id="t_xl" style="left:155.29px;top:803.9165px;font-size:19px;color:#fff;transform:scaleX(0.9113);">XLaunch</span>
<span class="tx" id="t_xm2" style="left:155.26px;top:857.9165px;font-size:19px;color:#fff;transform:scaleX(0.9761);">Xming</span>
<span class="tx" id="t_xweb" style="left:155.27px;top:911.9165px;font-size:19px;color:#fff;transform:scaleX(0.9596);">Xming on the Web</span>
<span class="tx" id="t_brow" style="left:485.33px;top:104.2165px;font-size:19px;color:#fff;transform:scaleX(0.9143);">Browsers</span>
<span class="tx" id="t_chrome" style="left:497.63px;top:266.08975px;font-size:18.5px;color:#fff;transform:scaleX(0.9740);">Google Chrome</span>
<span class="tx" id="t_search" style="left:134.13px;top:1052.5611999999999px;font-size:23.2px;color:#111;transform:scaleX(0.9374);">Type here to search</span>
<span class="tx" id="t_temp" style="left:1480.48px;top:1051.6542px;font-size:21.2px;color:#fff;transform:scaleX(0.9156);">65°F</span>
<span class="tx" id="t_cloudy" style="left:1533.82px;top:1051.6542px;font-size:21.2px;color:#fff;transform:scaleX(0.9846);">Cloudy</span>
<span class="tx" id="t_time" style="left:1822.45px;top:1036.65905px;font-size:18.3px;color:#fff;transform:scaleX(0.9635);">12:46 PM</span>
<span class="tx" id="t_date" style="left:1818.22px;top:1065.1283500000002px;font-size:18.1px;color:#fff;transform:scaleX(1.0354);">5/25/2023</span>
</body></html>
